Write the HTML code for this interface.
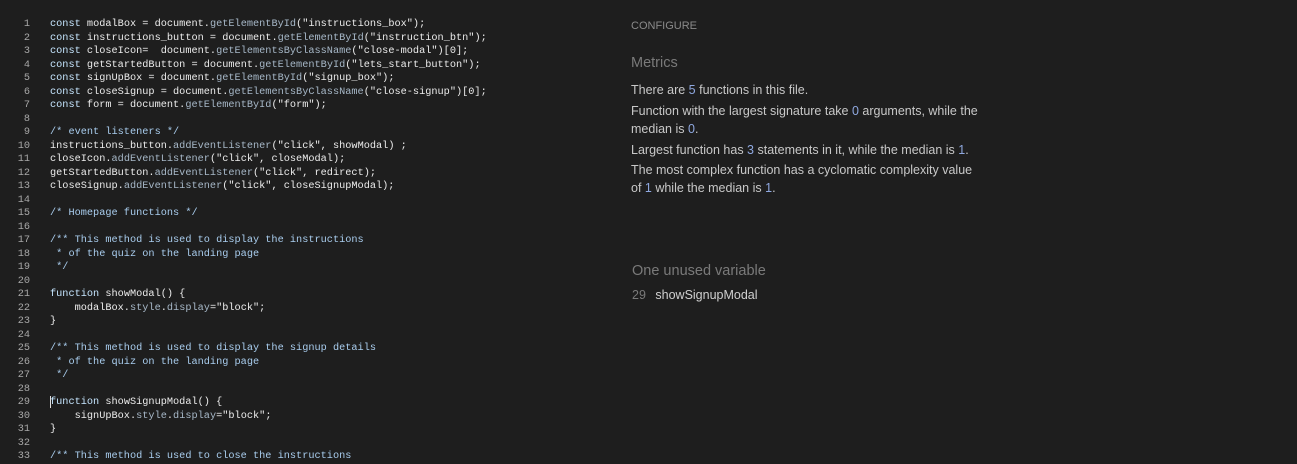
<!DOCTYPE html>
<html><head><meta charset="utf-8"><style>
body{margin:0;width:1297px;height:460px;background:#1e1e1e;overflow:hidden;position:relative;font-family:"Liberation Sans",sans-serif}
.code{position:absolute;left:0;top:18px;font-family:"Liberation Mono",monospace;font-size:10.25px;line-height:13.5px;color:#ececec;white-space:pre}
.ln{display:inline-block;width:30px;text-align:right;color:#a8a8a8;margin-right:20px;padding-left:0}
.k{color:#c6e6ff}.m{color:#a7b8c8}.c{color:#a9cdee}.s{color:#f0f0f0}
.r{position:absolute;left:631px;color:#c8c8c8;font-size:12.5px}
.n{color:#8fa8e0}
</style></head><body>
<div class="code"><span class="ln">1</span><span class="k">const</span> modalBox = document.<span class="m">getElementById</span>("instructions_box");
<span class="ln">2</span><span class="k">const</span> instructions_button = document.<span class="m">getElementById</span>("instruction_btn");
<span class="ln">3</span><span class="k">const</span> closeIcon=  document.<span class="m">getElementsByClassName</span>("close-modal")[0];
<span class="ln">4</span><span class="k">const</span> getStartedButton = document.<span class="m">getElementById</span>("lets_start_button");
<span class="ln">5</span><span class="k">const</span> signUpBox = document.<span class="m">getElementById</span>("signup_box");
<span class="ln">6</span><span class="k">const</span> closeSignup = document.<span class="m">getElementsByClassName</span>("close-signup")[0];
<span class="ln">7</span><span class="k">const</span> form = document.<span class="m">getElementById</span>("form");
<span class="ln">8</span>
<span class="ln">9</span><span class="c">/* event listeners */</span>
<span class="ln">10</span>instructions_button.<span class="m">addEventListener</span>("click", showModal) ;
<span class="ln">11</span>closeIcon.<span class="m">addEventListener</span>("click", closeModal);
<span class="ln">12</span>getStartedButton.<span class="m">addEventListener</span>("click", redirect);
<span class="ln">13</span>closeSignup.<span class="m">addEventListener</span>("click", closeSignupModal);
<span class="ln">14</span>
<span class="ln">15</span><span class="c">/* Homepage functions */</span>
<span class="ln">16</span>
<span class="ln">17</span><span class="c">/** This method is used to display the instructions</span>
<span class="ln">18</span><span class="c"> * of the quiz on the landing page</span>
<span class="ln">19</span><span class="c"> */</span>
<span class="ln">20</span>
<span class="ln">21</span><span class="k">function</span> showModal() {
<span class="ln">22</span>    modalBox.<span class="m">style</span>.<span class="m">display</span>="block";
<span class="ln">23</span>}
<span class="ln">24</span>
<span class="ln">25</span><span class="c">/** This method is used to display the signup details</span>
<span class="ln">26</span><span class="c"> * of the quiz on the landing page</span>
<span class="ln">27</span><span class="c"> */</span>
<span class="ln">28</span>
<span class="ln">29</span><span class="k">function</span> showSignupModal() {
<span class="ln">30</span>    signUpBox.<span class="m">style</span>.<span class="m">display</span>="block";
<span class="ln">31</span>}
<span class="ln">32</span>
<span class="ln">33</span><span class="c">/** This method is used to close the instructions</span></div>
<div style="position:absolute;left:50px;top:396px;width:1px;height:12px;background:#ddd"></div>
<div class="r" style="top:20px;font-size:11px;color:#8a8a8a">CONFIGURE</div>
<div class="r" style="top:55px;font-size:14.5px;color:#7a7a7a">Metrics</div>
<div class="r" style="top:81px;width:352px;line-height:18px">There are <span class="n">5</span> functions in this file.</div>
<div class="r" style="top:102px;width:352px;line-height:18px">Function with the largest signature take <span class="n">0</span> arguments, while the median is <span class="n">0</span>.</div>
<div class="r" style="top:141px;width:352px;line-height:18px">Largest function has <span class="n">3</span> statements in it, while the median is <span class="n">1</span>.</div>
<div class="r" style="top:161px;width:352px;line-height:18px">The most complex function has a cyclomatic complexity value of <span class="n">1</span> while the median is <span class="n">1</span>.</div>
<div class="r" style="top:263px;left:632px;font-size:14.5px;color:#7a7a7a">One unused variable</div>
<div class="r" style="top:288px;left:632px;color:#7a7a7a">29 <span style="color:#d0d0d0;margin-left:6px">showSignupModal</span></div>
</body></html>
